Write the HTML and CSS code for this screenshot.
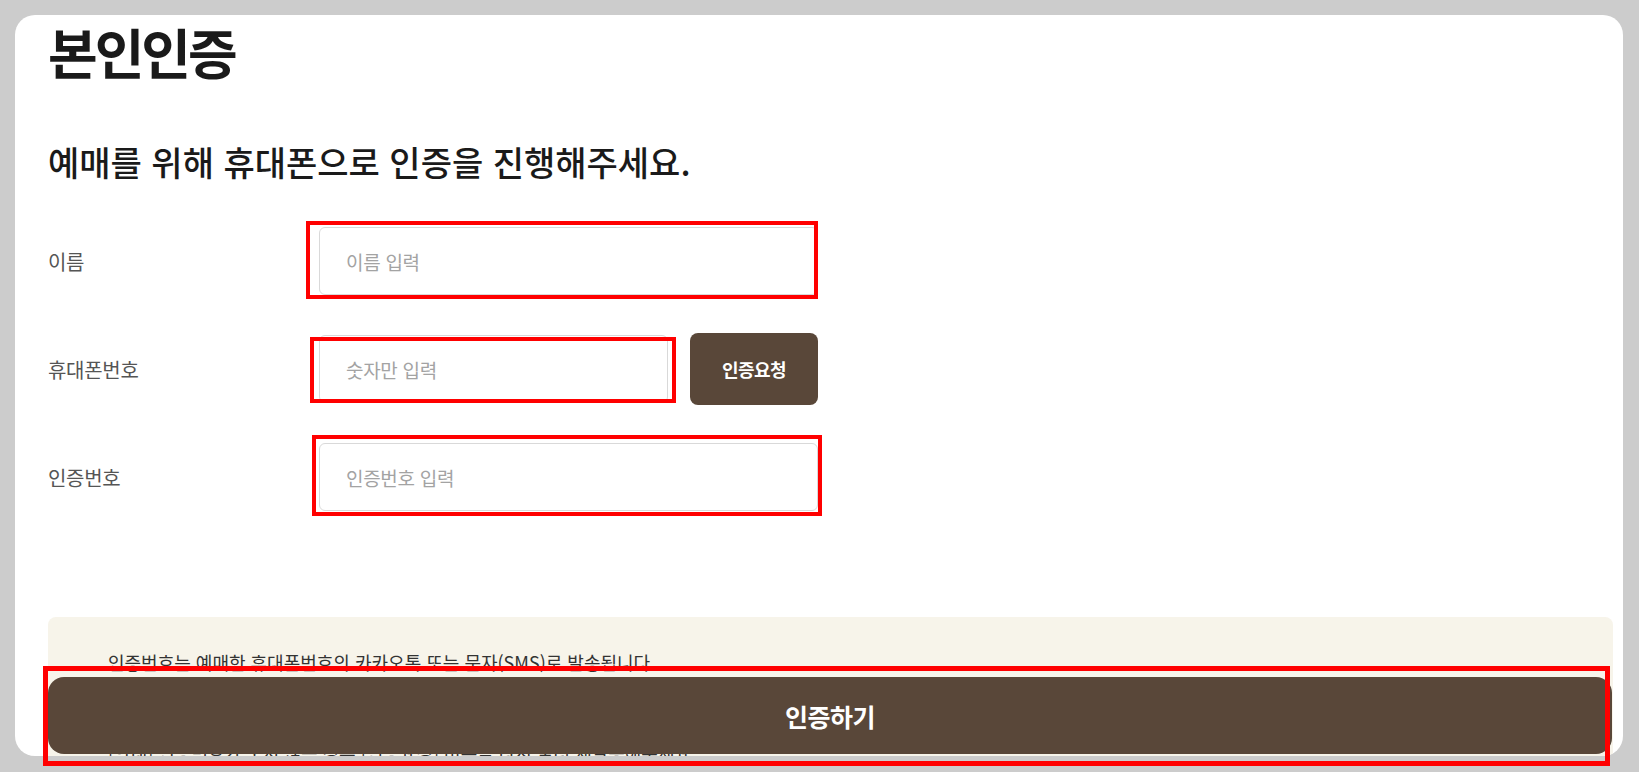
FILE: index.html
```html
<!DOCTYPE html>
<html lang="ko">
<head>
  <meta charset="UTF-8" />
  <meta name="viewport" content="width=device-width, initial-scale=1" />
  <title>본인인증</title>
  <link rel="stylesheet" href="styles.css">
</head>
<body>
  <main class="auth-card">
    <div class="auth-content">
      <h1 class="auth-title">본인인증</h1>
      <h2 class="auth-subtitle">예매를 위해 휴대폰으로 인증을 진행해주세요.</h2>

      <form class="auth-form" id="authForm" novalidate>
        <div class="form-row">
          <label class="form-label" for="userName">이름</label>
          <div class="form-field mark mark-name">
            <input type="text" id="userName" class="form-input" placeholder="이름 입력" autocomplete="off" />
          </div>
        </div>

        <div class="form-row">
          <label class="form-label" for="userPhone">휴대폰번호</label>
          <div class="form-field form-field-inline">
            <div class="input-wrap mark mark-phone">
              <input type="tel" id="userPhone" class="form-input" placeholder="숫자만 입력" autocomplete="off" />
            </div>
            <button type="button" class="btn-request">인증요청</button>
          </div>
        </div>

        <div class="form-row">
          <label class="form-label" for="authCode">인증번호</label>
          <div class="form-field mark mark-code">
            <input type="text" id="authCode" class="form-input" placeholder="인증번호 입력" autocomplete="off" />
          </div>
        </div>
      </form>

      <section class="notice-box">
        <p>인증번호는 예매한 휴대폰번호의 카카오톡 또는 문자(SMS)로 발송됩니다.</p>
        <p>[안내] 인증번호가 오지 않는 경우 [인증요청] 버튼을 다시 눌러 재발송해주세요.</p>
      </section>
    </div>

    <div class="submit-bar">
      <button type="submit" form="authForm" class="btn-submit">인증하기</button>
    </div>
  </main>
</body>
</html>
```

FILE: styles.css
```css
/* Reset and base */
*, *::before, *::after {
  box-sizing: border-box;
}
html {
  font-family: "Noto Sans CJK KR", "Noto Sans", sans-serif;
  font-size: 16px;
  color: #1a1a1a;
}
body {
  margin: 0;
  height: 772px;
  background: #cccccc;
  padding: 15px 16px 16px 15px;
  overflow: hidden;
}

/* review markers */
.mark {
  position: relative;
}
.mark::after,
.submit-bar::after {
  content: "";
  position: absolute;
  border: 4px solid #ff0000;
  pointer-events: none;
}
.mark-name::after {
  inset: -6px 0 -4px -13px;
}
.mark-phone::after {
  inset: 2px -8px 0 -9px;
}
.mark-code::after {
  inset: -8px -4px -5px -7px;
}

/* CARD */
.auth-card {
  position: relative;
  height: 741px;
  background: #ffffff;
  border-radius: 20px;
}

.auth-content {
  height: 100%;
  padding: 4px 10px 0 33px;
  border-radius: 20px;
  overflow: hidden;
}

.auth-title {
  margin: 0;
  font-size: 54px;
  line-height: 65px;
  font-weight: 700;
  letter-spacing: -3px;
  color: #1a1a1a;
}

.auth-subtitle {
  margin: 55px 0 0;
  font-size: 34px;
  line-height: 46px;
  font-weight: 500;
  letter-spacing: 0;
  color: #1a1a1a;
}

/* FORM */
.auth-form {
  margin-top: 40px;
  display: flex;
  flex-direction: column;
  gap: 36px;
}

.form-row {
  display: flex;
  align-items: center;
  min-height: 72px;
}

.form-label {
  flex: 0 0 271px;
  font-size: 20px;
  color: #555555;
  letter-spacing: -0.3px;
}

.form-field {
  width: 499px;
}

.form-field-inline {
  display: flex;
  align-items: center;
  gap: 22px;
}

.input-wrap {
  flex: 1;
}

.form-input {
  display: block;
  width: 100%;
  height: 68px;
  padding: 0 26px;
  border: 1px solid #d9d9d9;
  border-radius: 6px;
  background: #ffffff;
  font-family: inherit;
  font-size: 19px;
  color: #333333;
  letter-spacing: -0.3px;
  outline: none;
}
.form-input::placeholder {
  color: #a3a3a3;
}

.btn-request {
  flex: 0 0 128px;
  height: 72px;
  border: none;
  border-radius: 8px;
  background: #594739;
  color: #ffffff;
  font-family: inherit;
  font-size: 18px;
  font-weight: 700;
  letter-spacing: -0.5px;
  cursor: pointer;
}

/* NOTICE */
.notice-box {
  margin-top: 104px;
  min-height: 200px;
  padding: 30px 60px;
  background: #f7f4ea;
  border-radius: 8px;
}
.notice-box p {
  margin: 0;
  font-size: 18px;
  line-height: 30px;
  color: #333333;
}
.notice-box p + p {
  margin-top: 60px;
}

/* SUBMIT */
.submit-bar {
  position: absolute;
  left: 33px;
  right: 11px;
  bottom: 2px;
}
.submit-bar::after {
  inset: -11px 2px -12px -5px;
  border-width: 5px;
}

.btn-submit {
  display: block;
  width: 100%;
  height: 77px;
  border: none;
  border-radius: 16px;
  background: #594739;
  color: #ffffff;
  font-family: inherit;
  font-size: 25px;
  font-weight: 700;
  letter-spacing: -0.5px;
  cursor: pointer;
}
```
